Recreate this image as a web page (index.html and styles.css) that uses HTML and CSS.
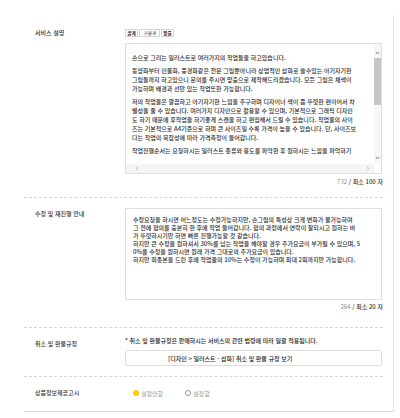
FILE: index.html
```html
<!DOCTYPE html>
<html lang="ko">
<head>
<meta charset="utf-8">
<link rel="stylesheet" href="styles.css">
</head>
<body>
<div class="card">
  <div class="row row-desc">
    <div class="label">서비스 설명</div>
    <div class="content">
      <div class="toolbar">
        <span class="tb tb-b">굵게</span>
        <span class="tb tb-i">기울게</span>
        <span class="tb tb-u">밑줄</span>
      </div>
      <div class="editor">
        <div class="editor-text">
          <p>손으로 그리는 일러스트로 여러가지의 작업들을 하고있습니다.</p>
          <p>동양화부터 인물화, 풍경화같은 전문 그림뿐아니라 상업적인 삽화로 쓸수있는 아기자기한<br>그림들까지 하고있으니 문의를 주시면 맞춤으로 제작해드리겠습니다. 모든 그림은 채색이<br>가능하며 배경과 선만 있는 작업또한 가능합니다.</p>
          <p>저의 작업물은 깔끔하고 아기자기한 느낌을 추구하며 디자이너 색이 좀 뚜렷한 편이어서 차<br>별성을 줄 수 있습니다. 여러가지 디자인으로 활용할 수 있으며, 기본적으로 그래픽 디자인<br>도 하기 때문에 후작업을 하기좋게 스캔을 하고 편집해서 드릴 수 있습니다. 작업물의 사이<br>즈는 기본적으로 A4기준으로 하며 큰 사이즈일 수록 가격이 높을 수 있습니다. 단, 사이즈보<br>다는 작업의 복잡성에 따라 가격측정이 들어갑니다.</p>
          <p>작업진행순서는 요청하시는 일러스트 종류와 용도를 파악한 후 원하시는 느낌을 파악하기</p>
        </div>
        <div class="vscroll">
          <svg class="arr" width="5" height="4" viewBox="0 0 5 4"><path d="M0.8 3 L2.5 1.2 L4.2 3" fill="none" stroke="#666" stroke-width="0.9"/></svg>
          <div class="vtrack"><div class="vthumb"></div></div>
          <svg class="arr" width="5" height="4" viewBox="0 0 5 4"><path d="M0.8 1 L2.5 2.8 L4.2 1" fill="none" stroke="#666" stroke-width="0.9"/></svg>
        </div>
        <div class="hscroll">
          <svg class="arr" width="4" height="5" viewBox="0 0 4 5"><path d="M3 0.8 L1.2 2.5 L3 4.2" fill="none" stroke="#aaa" stroke-width="0.8"/></svg>
          <svg class="arr" width="4" height="5" viewBox="0 0 4 5"><path d="M1 0.8 L2.8 2.5 L1 4.2" fill="none" stroke="#aaa" stroke-width="0.8"/></svg>
        </div>
        <div class="corner"></div>
      </div>
      <div class="counter"><span class="num">732</span> / 최소 100 자</div>
    </div>
  </div>

  <div class="row row-edit">
    <div class="label">수정 및 재진행 안내</div>
    <div class="content">
      <div class="box2">
        수정요청을 하시면 어느정도는 수정가능하지만, 손그림의 특성상 크게 변화가 불가능하여<br>그 전에 협의를 충분히 한 후에 작업 들어갑니다. 협의 과정에서 연락이 잘되시고 원하는 바<br>가 뚜렷하시기만 하면 빠른 진행가능할 것 같습니다.<br>하지만 큰 수정을 원하셔서 30%를 넘는 작업을 해야할 경우 추가요금이 부가될 수 있으며, 5<br>0%를 수정을 원하시면 원래 가격 그대로의 추가요금이 있습니다.<br>하지만 최종본을 드린 후에 작업물의 10%는 수정이 가능하며 최대 2회까지만 가능합니다.
      </div>
      <div class="counter"><span class="num">264</span> / 최소 20 자</div>
    </div>
  </div>

  <div class="row row-refund">
    <div class="label">취소 및 환불규정</div>
    <div class="content">
      <div class="note">* 취소 및 환불규정은 판매하시는 서비스의 관련 법령에 따라 일괄 적용됩니다.</div>
      <div class="policy-btn">[디자인 &gt; 일러스트 - 삽화] 취소 및 환불 규정 보기</div>
    </div>
  </div>

  <div class="row row-info">
    <div class="label">상품정보제공고시</div>
    <div class="content radios">
      <span class="radio"><span class="dot on"></span>설정안함</span>
      <span class="radio"><span class="dot"></span>설정함</span>
    </div>
  </div>
</div>
</body>
</html>
```

FILE: styles.css
```css
* { box-sizing: border-box; }
html, body { margin: 0; padding: 0; background: #fff; }
body {
  font-family: "Noto Sans CJK KR", "Noto Sans", sans-serif;
  font-size: 6px;
  color: #333;
  width: 400px;
  height: 418px;
  overflow: hidden;
}
.card {
  margin: 15px 0 0 24px;
  width: 370px;
  padding-right: 10px;
  border-right: 1px solid #e4e4e4;
  border-bottom: 1px solid #dcdcdc;
}
.row {
  display: grid;
  grid-template-columns: 101px 258px;
  border-bottom: 1px dashed #d6d6d6;
}
.row:last-child { border-bottom: none; }
.label {
  padding-left: 11px;
  font-weight: 500;
  color: #333;
  line-height: 8px;
}
.row-desc { padding: 14px 0 11px; }
.toolbar { display: flex; gap: 1px; height: 8px; }
.tb {
  display: flex;
  align-items: center;
  justify-content: center;
  height: 8px;
  border: 1px solid #d4d4d4;
  font-size: 4.6px;
  line-height: 6px;
  white-space: nowrap;
  color: #222;
  padding: 0;
  background: #fff;
  overflow: hidden;
}
.tb-b { width: 13px; font-weight: 700; }
.tb-i { width: 21px; font-style: italic; }
.tb-u { width: 13px; text-decoration: underline; font-weight: 700; }
.editor {
  margin-top: 6px;
  width: 257px;
  height: 131px;
  border: 1px solid #dedede;
  display: grid;
  grid-template-columns: 1fr 7px;
  grid-template-rows: 1fr 9px;
}
.editor-text {
  overflow: hidden;
  padding: 9px 0 0 6px;
  white-space: nowrap;
  line-height: 9px;
  color: #2e2e2e;
  font-weight: 500;
}
.editor-text p { margin: 0 0 4px; }
.vscroll {
  background: #f7f7f7;
  display: flex;
  flex-direction: column;
  align-items: center;
  padding: 7px 0 4px;
}
.vtrack { flex: 1; width: 100%; padding: 3px 0 0; }
.vthumb { height: 47px; background: #c6c6c6; width: 100%; }
.vscroll .arr { flex: none; }
.hscroll {
  background: #f4f4f4;
  display: flex;
  align-items: center;
  justify-content: space-between;
  padding: 0 4px 0 9px;
}
.corner { background: #fff; }
.counter {
  text-align: right;
  font-size: 6px;
  line-height: 8px;
  margin-top: 4px;
  color: #333;
  font-weight: 500;
}
.counter .num { color: #888; font-weight: 400; }
.row-edit { padding: 10px 0 16px; }
.row-edit .label { padding-top: 2px; }
.box2 {
  width: 257px;
  height: 92px;
  border: 1px solid #dedede;
  padding: 7px 0 0 7px;
  line-height: 8px;
  white-space: nowrap;
  overflow: hidden;
  color: #2e2e2e;
  font-weight: 500;
}
.row-edit .counter { margin-top: 3px; }
.row-refund { padding: 9px 0 10px; }
.row-refund .label { padding-top: 3px; }
.note { line-height: 8px; color: #222; font-weight: 500; }
.policy-btn {
  margin-top: 5px;
  width: 257px;
  height: 16px;
  border: 1px solid #dedede;
  border-radius: 2px;
  display: flex;
  align-items: center;
  padding-left: 42px;
  color: #222;
  font-weight: 500;
}
.row-info { padding: 12px 0 14px; }
.radios { display: flex; align-items: center; gap: 22px; padding-left: 8px; height: 8px; color: #999; }
.radio { display: flex; align-items: center; gap: 2px; }
.dot {
  width: 6px; height: 6px; border-radius: 50%;
  border: 1px solid #999;
  background: #fff;
}
.dot.on { border-color: #f5c500; background: #ffd200; }
```
